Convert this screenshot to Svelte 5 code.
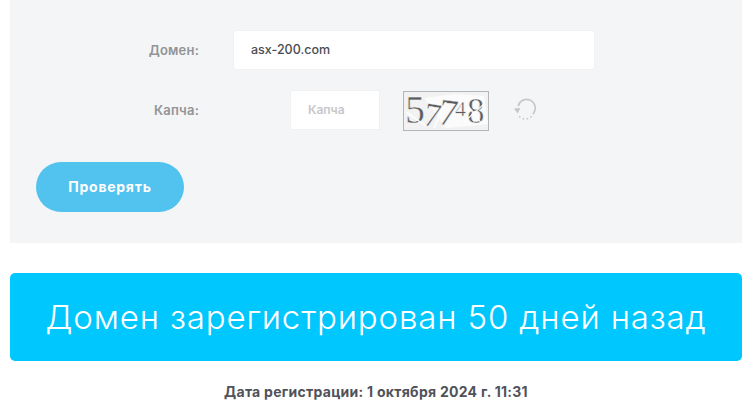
<script>
  let domain = "asx-200.com";
  const digits = [
    { ch: "5", x: 1, y: 31, size: 40, rot: 0 },
    { ch: "7", x: 18, y: 33, size: 34, rot: 10 },
    { ch: "7", x: 33, y: 32, size: 38, rot: 8 },
    { ch: "4", x: 51, y: 24, size: 22, rot: 0 },
    { ch: "8", x: 63, y: 31, size: 35, rot: 0 }
  ];
</script>

<div class="page">
  <form class="panel" on:submit|preventDefault>
    <div class="row domain-row">
      <label for="domain">Домен:</label>
      <input id="domain" class="field domain" bind:value={domain} />
    </div>
    <div class="row captcha-row">
      <label for="captcha">Капча:</label>
      <input id="captcha" class="field captcha" placeholder="Капча" />
      <div class="captcha-img">
        <svg width="84" height="38" viewBox="0 0 84 38">
          <path d="M20 6 L42 36 L84 32 L80 4 L50 2 Z" fill="#fbfbfb" />
          {#each digits as d}
            <text
              x={d.x}
              y={d.y}
              font-size={d.size}
              transform="rotate({d.rot} {d.x} {d.y})"
              class="digit">{d.ch}</text>
          {/each}
          <path d="M2 20 L22 34 M30 36 L42 10 M60 30 L80 12 M64 14 L78 32" stroke="#fff" stroke-width="1.6" opacity="0.85" />
        </svg>
      </div>
      <button type="button" class="refresh" aria-label="Обновить капчу">
        <svg width="24" height="24" viewBox="0 0 24 24" fill="none">
          <path d="M5.2 8.2A8.6 8.6 0 1 1 20.6 15" stroke="#c4c6c9" stroke-width="1.6" />
          <path d="M20.6 15A8.6 8.6 0 0 1 5.6 17.6" stroke="#c4c6c9" stroke-width="1.6" stroke-dasharray="1.5 2.5" />
          <path d="M1 10.5 L7.4 10 L4.6 15.5 Z" fill="#c4c6c9" />
        </svg>
      </button>
    </div>
    <button type="submit" class="submit">Проверять</button>
  </form>

  <div class="banner">Домен зарегистрирован 50 дней назад</div>

  <p class="date">Дата регистрации: 1 октября 2024 г. 11:31</p>
</div>

<style>
  :global(body) {
    background: #fff;
    font-family: "Inter", "Noto Sans", sans-serif;
  }

  .page {
    height: 415px;
    overflow: hidden;
    padding: 0 11px 0 10px;
    box-sizing: border-box;
  }

  .panel {
    background: #f4f5f7;
    height: 243px;
    padding-top: 30px;
    box-sizing: border-box;
  }

  .row {
    display: flex;
    align-items: center;
  }

  label {
    width: 189px;
    text-align: right;
    font-size: 13px;
    font-weight: 600;
    letter-spacing: 0.2px;
    color: #929496;
  }

  .field {
    height: 40px;
    box-sizing: border-box;
    background: #fff;
    border: 1px solid #f0f1f3;
    border-radius: 3px;
    font-family: inherit;
    font-size: 13px;
    outline: none;
  }

  .domain {
    margin-left: 34px;
    width: 362px;
    padding: 0 17px 2px;
    color: #4a4c52;
    font-size: 12.5px;
    font-weight: 500;
  }

  .captcha-row {
    margin-top: 20px;
    height: 40px;
  }

  .captcha {
    margin-left: 91px;
    width: 90px;
    padding: 0 17px 2px;
    font-size: 12px;
    font-weight: 500;
    border-radius: 0;
  }

  .captcha::placeholder {
    color: #c6c7ca;
    font-weight: 600;
    opacity: 1;
  }

  .captcha-img {
    margin-left: 23px;
    margin-top: 2px;
    width: 86px;
    height: 40px;
    box-sizing: border-box;
    border: 1px solid #b4b5b7;
    background: #f2f2f2;
    display: flex;
  }

  .captcha-img svg {
    overflow: visible;
  }

  .digit {
    font-family: "Liberation Serif", serif;
    fill: #5a5c5f;
    stroke: #f6f6f6;
    stroke-width: 0.5;
  }

  .refresh {
    margin-left: 24px;
    padding: 0;
    width: 24px;
    height: 24px;
    border: 0;
    background: none;
    display: flex;
  }

  .submit {
    display: block;
    margin: 32px 0 0 26px;
    width: 148px;
    height: 50px;
    padding-bottom: 2px;
    border: 0;
    border-radius: 25px;
    background: #52c2ee;
    color: #fff;
    font-family: inherit;
    font-size: 14px;
    font-weight: 700;
    letter-spacing: 0.75px;
  }

  .banner {
    margin-top: 30px;
    height: 88px;
    border-radius: 5px;
    background: #00c8ff;
    color: #fff;
    font-size: 33px;
    font-weight: 300;
    letter-spacing: 0.85px;
    display: flex;
    align-items: center;
    justify-content: center;
  }

  .date {
    margin: 22px 0 0;
    text-align: center;
    font-size: 14px;
    font-weight: 700;
    letter-spacing: 0.27px;
    color: #50525a;
  }
</style>
